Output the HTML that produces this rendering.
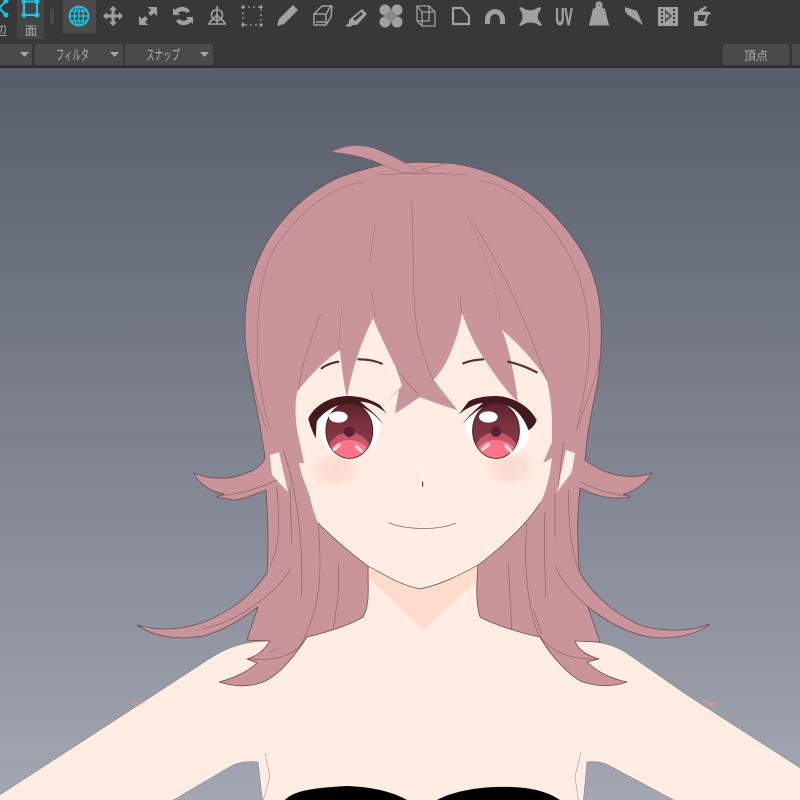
<!DOCTYPE html>
<html><head><meta charset="utf-8"><style>
html,body{margin:0;padding:0;width:800px;height:800px;overflow:hidden;background:#383838}
svg{display:block}
text{font-family:"Liberation Sans","Noto Sans CJK JP",sans-serif}
</style></head><body>
<svg width="800" height="800" viewBox="0 0 800 800" xmlns="http://www.w3.org/2000/svg">
<defs>
<linearGradient id="bg" x1="0" y1="68" x2="0" y2="800" gradientUnits="userSpaceOnUse"><stop offset="0" stop-color="#575d6a"/><stop offset="1" stop-color="#a2a7b2"/></linearGradient>
<radialGradient id="bl"><stop offset="0" stop-color="#fad8cc" stop-opacity=".9"/><stop offset=".6" stop-color="#fad8cc" stop-opacity=".65"/><stop offset="1" stop-color="#fad8cc" stop-opacity="0"/></radialGradient>
<linearGradient id="ir" x1="0" y1="0" x2="0" y2="1"><stop offset="0" stop-color="#5a222c"/><stop offset=".4" stop-color="#7c3240"/><stop offset="1" stop-color="#8f3c4a"/></linearGradient>
<clipPath id="cl"><ellipse cx="208" cy="302" rx="69" ry="82"/></clipPath>
<clipPath id="cr"><ellipse cx="648" cy="302" rx="69" ry="82"/></clipPath>
</defs>
<rect width="800" height="800" fill="url(#bg)"/>

<!-- small hair behind arms -->
<path d="M129 703L145 700L137 708Z M700 700L718 703L713 708Z" fill="#c9959b"/>

<!-- body -->
<path d="M-5 798L120 717L203 663C222 650 240 641 270 641L575 641C595 641 610 643 625 652L687 695L805 771V805H683L610 766C603 762 595 761 587 762L583 805H263L258 762C250 761 240 762 233 765L165 805H-5Z" fill="#ffece2" stroke="#85706c" stroke-width=".5"/>
<path d="M360 560H485L560 650H290Z" fill="#ffece2"/>
<path d="M285 800C293 792 307 788 347 786C375 787 395 793 407 800Z M437 800C450 793 470 788 495 787C525 786 545 790 560 800Z" fill="#000"/>
<path d="M368 566L420 589L478 565V580L423 630L368 577Z" fill="#ffdccb"/>

<!-- hair silhouette -->
<path d="M245 320C246 285 258 255 273 233C290 208 315 188 340 177C360 170 375 166 393 163C410 162 430 162 447 163C475 165 500 176 520 187C545 202 568 228 583 253C595 275 600 295 601 320C602 350 600 375 594 400C591 415 588 430 587 440L585 460C600 472 625 482 652 473C645 485 635 491 623 494L630 497C610 500 595 496 580 488C578 510 577 525 578 540C578 552 578 562 580 573C590 590 610 612 640 625C660 632 690 632 710 624C695 636 670 640 650 637C625 633 605 620 588 607L600 642L575 641C577 648 585 655 599 659L587 662C597 672 612 679 627 682C610 688 595 686 583 682C570 677 550 655 540 637C520 633 495 625 480 617C475 600 477 580 478 565L368 566C368 590 370 605 363 617C350 625 325 633 307 637C295 655 280 675 263 682C250 687 235 687 219 682C235 678 250 670 257 663L247 659C258 656 266 648 270 641L247 640L258 607C240 620 225 630 203 636C180 640 155 638 137 625C160 632 190 630 215 617C240 605 255 590 267 573C268 560 268 550 268 540C268 520 267 505 266 490C255 494 245 499 233 500L217 497L224 494C210 492 198 483 194 473C210 480 232 480 247 473C255 470 262 465 265 458C262 430 250 380 245 340Z" fill="#c9959b" stroke="#6e4c4d" stroke-width=".8" stroke-linejoin="round"/>
<path d="M332 152C345 144 365 143 383 152C395 157 410 165 420 173L403 173L383 165C370 158 350 154 332 152Z" fill="#c9959b" stroke="#7d5b5c" stroke-width=".4"/>

<!-- ears -->
<path d="M270 455L279 452L288 492L272 475Z M575 453L566 450L557 492L572 472Z" fill="#ffece2"/>

<!-- face skin -->
<path d="M297 392C310 375 325 360 340 350C342 370 344 385 347 397C352 370 360 345 373 318C382 340 390 355 397 370L402 386L385 403L399 390L395 413C405 408 412 402 420 397C432 402 445 406 457 410C448 400 440 390 433 380C445 370 458 340 462 313C468 330 475 345 483 357C495 375 505 390 518 402C515 380 510 350 502 330C520 345 535 362 547 380C550 395 552 410 552 420L552 442L543 463L552 458L550 473C547 485 545 495 540 503C530 520 505 545 478 565C460 575 440 585 420 589C400 585 385 575 368 566C350 553 330 535 318 523C313 510 311 503 310 497C306 485 301 475 299 463L304 463L297 430C295 415 295 405 297 392Z" fill="#ffece2"/>
<path d="M318 523C330 535 350 553 368 566C385 575 400 585 420 589C440 585 460 575 478 565C505 545 530 520 540 503" fill="none" stroke="#5d4a45" stroke-width=".7"/>

<!-- blush -->
<ellipse cx="335" cy="470" rx="26" ry="18" fill="url(#bl)"/>
<ellipse cx="510" cy="468" rx="26" ry="18" fill="url(#bl)"/>

<!-- eyes (zoom coords) -->
<g transform="translate(280 330) scale(.33333)">
<path d="M110 280C120 240 170 215 230 215C275 225 300 270 300 300C295 340 265 380 190 385C140 370 115 320 110 280Z" fill="#fff"/>
<path d="M555 280C575 240 610 215 670 215C720 225 750 270 750 310C740 350 700 385 650 385C600 380 565 330 555 280Z" fill="#fff"/>
<ellipse cx="208" cy="302" rx="70" ry="83" fill="url(#ir)" stroke="#4a1c24" stroke-width="3"/>
<ellipse cx="648" cy="302" rx="70" ry="83" fill="url(#ir)" stroke="#4a1c24" stroke-width="3"/>
<g clip-path="url(#cl)"><ellipse cx="208" cy="385" rx="72" ry="78" fill="#c25868"/><ellipse cx="208" cy="390" rx="68" ry="60" fill="#ff7488"/></g>
<g clip-path="url(#cr)"><ellipse cx="648" cy="385" rx="72" ry="78" fill="#c25868"/><ellipse cx="648" cy="390" rx="68" ry="60" fill="#ff7488"/></g>
<circle cx="208" cy="305" r="16" fill="#5c2030"/><circle cx="648" cy="305" r="16" fill="#5c2030"/>
<ellipse cx="175" cy="261" rx="28" ry="17" fill="#fff"/><ellipse cx="625" cy="261" rx="28" ry="17" fill="#fff"/>
<path d="M163 358L178 345 M230 350L245 364 M608 358L625 344 M678 348L692 364" stroke="#ffd8de" stroke-width="10" stroke-linecap="round"/>
<path d="M85 265C105 225 150 200 200 198C245 198 275 210 300 225L320 250C290 225 260 215 240 215C265 235 290 255 310 282C285 255 255 225 205 220C165 222 125 250 110 275L107 325C95 300 88 280 85 265Z" fill="#421a1e"/>
<path d="M770 270C750 230 700 200 650 198C610 198 580 205 565 215L537 253C565 230 590 222 610 218C585 240 565 260 545 283C575 255 600 225 650 220C690 222 725 245 745 300L750 298C760 290 768 280 770 270Z" fill="#421a1e"/>
<path d="M125 115C140 103 155 98 175 95 M235 88C260 88 285 92 305 101 M550 100C570 92 590 89 610 88 M685 95C715 102 745 113 770 127" fill="none" stroke="#5a2c30" stroke-width="6.500" stroke-linecap="round"/>
<path d="M428 415L434 445H422Z" fill="#fff"/>
<path d="M428 455V470" stroke="#222" stroke-width="3"/>
<path d="M325 578C380 600 470 602 527 580" fill="none" stroke="#7f6a62" stroke-width="2.400"/>
</g>

<!-- hair lines top -->
<g transform="translate(230 130) scale(.33333)" fill="none" stroke="#8a6466" stroke-width="1.600">
<path d="M405 155C300 170 210 240 130 360C90 440 75 560 85 730C95 800 105 850 120 900"/>
<path d="M440 135Q570 125 710 135"/>
<path d="M570 120L650 100 M570 120L600 128"/>
<path d="M750 152C850 165 960 260 1030 400C1075 500 1085 620 1075 700C1065 790 1050 850 1040 900"/>
<path d="M545 215C555 350 540 530 570 640C585 690 600 730 610 750L680 840"/>
<path d="M435 280L418 400 M425 480L435 560" stroke-width="1.200"/>
<path d="M730 278C800 390 870 520 950 750"/>
<path d="M710 260C760 340 800 470 810 570" stroke-width="1" stroke-dasharray="8 3"/>
<path d="M272 552C240 640 215 700 205 780"/>
<path d="M335 530L325 660" stroke-width="1"/>
<path d="M690 505L695 550"/>
<path d="M500 720L570 800"/>
<path d="M45 640C60 740 85 830 110 900"/>
<path d="M1110 680C1095 760 1060 840 1040 900"/>
</g>

<!-- hair lines left -->
<g transform="translate(120 440) scale(.33333)" fill="none" stroke="#75575a" stroke-width="1.600">
<path d="M470 140C480 250 480 320 450 378"/>
<path d="M490 30C530 150 550 300 545 470"/>
<path d="M595 250C600 350 615 470 550 600C530 650 450 665 380 657"/>
<path d="M655 370C660 450 650 500 640 565"/>
<path d="M512 385C480 450 350 550 250 565"/>
<path d="M510 140L515 310"/>
<path d="M470 120C420 145 350 165 290 167"/>
<path d="M435 940L450 1010L430 1080" stroke-width="1.100"/>
<path d="M470 625L445 640"/>
</g>

<!-- hair lines right -->
<g transform="translate(420 440) scale(.33333)" fill="none" stroke="#75575a" stroke-width="1.600">
<path d="M320 250C315 330 310 440 350 570C375 630 450 660 535 658"/>
<path d="M265 370L275 570"/>
<path d="M375 215C370 300 375 400 378 475"/>
<path d="M405 160V290"/>
<path d="M445 150C445 230 450 320 475 390"/>
<path d="M405 380C440 450 520 530 610 565"/>
<path d="M430 10L415 140"/>
<path d="M480 125C520 145 570 165 630 168"/>
<path d="M340 510L365 580"/>
<path d="M483 937L465 1010L475 1080" stroke-width="1.100"/>
</g>

<!-- TOOLBAR -->
<rect width="800" height="66" fill="#383838"/>
<rect y="66" width="800" height="2" fill="#2b2d31"/>
<rect x="17" width="27" height="39" fill="#454545"/>
<rect x="63" width="33" height="33" fill="#4b4b4b"/>
<g fill="#4a4a4a">
<rect x="0" y="44" width="32" height="21"/><rect x="35" y="44" width="88" height="21"/><rect x="125" y="44" width="88" height="21"/>
<rect x="723" y="44" width="66" height="21"/><rect x="792" y="44" width="8" height="21"/>
</g>
<g fill="#a8a8a8"><path d="M20 52h9l-4.500 5z M110 52h9l-4.500 5z M200 52h9l-4.500 5z"/></g>
<g fill="#adadad" font-size="14">
<text x="56" y="60" textLength="33" lengthAdjust="spacingAndGlyphs">フィルタ</text>
<text x="146" y="60" textLength="34" lengthAdjust="spacingAndGlyphs">スナップ</text>
</g>
<g fill="#adadad" font-size="12">
<text x="756" y="60" text-anchor="middle">頂点</text>
<text x="31" y="35" text-anchor="middle">面</text>
<text x="1" y="35" text-anchor="middle">辺</text>
</g>
<!-- cyan -->
<g fill="none" stroke="#19c8e6" stroke-width="2">
<path d="M6 1L-1 8L6 15"/>
<rect x="24" y="1.500" width="13" height="13.500"/>
<circle cx="79" cy="16" r="9.500" stroke-width="1.800"/>
<ellipse cx="79" cy="16" rx="4.500" ry="9.500" stroke-width="1.300"/>
<path d="M69.500 16H88.500M71 11H87M71 21H87M79 6.500V25.500" stroke-width="1.300"/>
</g>
<g fill="#19c8e6"><circle cx="24" cy="1.500" r="2.500"/><circle cx="37" cy="1.500" r="2.500"/><circle cx="24" cy="15" r="2.500"/><circle cx="37" cy="15" r="2.500"/><circle cx="6" cy="15" r="2.500"/><circle cx="6" cy="1" r="2.500"/></g>
<g fill="#a0a0a0" stroke="none">
<path d="M113 6l4 4h-2.500v4.500H119V12l4 4-4 4v-2.500h-4.500V22h2.500l-4 4-4-4h2.500v-4.500H107V20l-4-4 4-4v2.500h4.500V10H109z"/>
<path d="M139 25v-9l3 3 3-3 3 3-3 3 3 3h-9zM157 7v9l-3-3-3 3-3-3 3-3-3-3h9z"/>
<path d="M190 11a9 8 0 0 0-15-1l-2-2v7h7l-2-2a6 5 0 0 1 9 0zM176 21a9 8 0 0 0 15 1l2 2v-7h-7l2 2a6 5 0 0 1-9 0z"/>
<path d="M293 5l5 5-14 14-7 2 2-7z"/>
<path d="M362 9l5 5-10 11h-4l-3 2-5-1 4-3v-3zM361 12l-8 7 2 2 8-7z" fill-rule="evenodd"/>
<g><circle cx="385" cy="10" r="5.500"/><circle cx="397" cy="10" r="5.500"/><circle cx="385" cy="22" r="5.500"/><circle cx="397" cy="22" r="5.500"/><path d="M391 9l7 7-7 7-7-7z" fill="#8a8a8a"/></g>
<path d="M523 8c4 3 10 3 14 0l3-1 1 2-1 2c-3 3-3 8 0 11l2 3-2 1-3-2c-4-2-9-2-13 0l-3 2-2-1 2-3c2-3 2-8 0-11l-2-3 2-1z"/>
<path d="M596 7a3.500 3.500 0 1 1 6 0l1 2h2l3 13 1 3v1h-20v-1l1-3 3-13h2zM598 5.500a1.500 1.500 0 0 0 2 0 1.500 1.500 0 0 0-2 0z" fill-rule="evenodd" transform="translate(0 -.5)"/>
<path d="M625 7l12 4 6 14-16-11-2-3z"/>
<path d="M658 7h20v19h-20z"/>
<path d="M694 26V12l5-1 1-2 6-3 1 2-5 3 8 1 1 2-3 1-3 9 2-1 1 2-4 1zM698 15v6h6l2-6z" fill-rule="evenodd"/>
</g>
<g fill="#383838"><path d="M661 9h2v2h-2zM661 13h2v2h-2zM661 17h2v2h-2zM661 21h2v2h-2zM673 9h2v2h-2zM673 13h2v2h-2zM673 17h2v2h-2zM673 21h2v2h-2z"/></g>
<path d="M665 10V22L672 16Z" fill="#383838"/>
<path d="M665.500 12.500V19.500L670 16Z" fill="#a0a0a0"/>
<g fill="none" stroke="#a0a0a0" stroke-width="1.700">
<circle cx="217" cy="15" r="5.500" stroke-width="1.600"/>
<path d="M217 6V24M209 23L217 15L225 23M208 24H226" stroke-width="1.600"/>
<path d="M243 7h18v18h-18z" stroke-dasharray="2 3" stroke-width="1.300"/>
<path d="M314 14h12v11h-12z M314 14l8-8h9l-5 8 M326 25l5-8 1-11 M316 22h9" stroke-width="1.500"/>
<path d="M417 6h12l6 6v14h-13l-5-5z M417 6l5 6h13 M422 12v14 M417 21h12V6" stroke-width="1.300"/>
<path d="M453 8h9l7 8v8h-16z" stroke-width="2.200"/>
</g>
<g fill="#a0a0a0">
<circle cx="243" cy="7" r="1.600"/><circle cx="261" cy="7" r="1.600"/><circle cx="243" cy="25" r="1.600"/><circle cx="261" cy="25" r="1.600"/>
<path d="M485 20a10 11 0 0 1 20 0v4h-5v-4a5 6 0 0 0-10 0v4h-5z"/>
</g>
<text x="564" y="25" font-size="24" font-weight="bold" fill="#a0a0a0" stroke="#a0a0a0" stroke-width=".8" text-anchor="middle" style="font-family:'Liberation Sans',sans-serif" transform="translate(564 0) scale(.52 1) translate(-564 0)">UV</text>
<g fill="#5a5a5a"><path d="M50 9h4v15h-4z" opacity=".5"/></g>
</svg>
</body></html>
